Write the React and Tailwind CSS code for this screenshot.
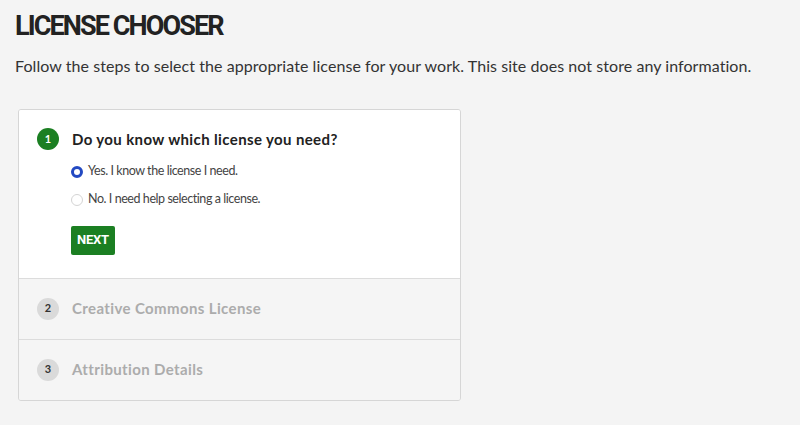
const Step = ({ n, title, active, children }) => (
  <div className={active ? 'bg-white' : 'bg-[#f5f5f5] border-t border-[#dcdcdc]'}>
    <div className={`flex items-center gap-[13px] pl-[18px] ${active ? 'pt-[18px]' : 'h-[60px]'}`}>
      <span
        className={`w-[22px] h-[22px] rounded-full flex items-center justify-center text-[11px] font-bold ${
          active ? 'bg-[#1b7f22] text-white' : 'bg-[#dadada] text-[#333]'
        }`}
      >
        {n}
      </span>
      <h2 className={`text-[15px] font-bold tracking-[0.025em] ${active ? 'text-[#222]' : 'text-[#acacac]'}`}>{title}</h2>
    </div>
    {children}
  </div>
);

const Radio = ({ checked, label }) => (
  <label className="flex items-center gap-[5px] h-[28px]">
    <span
      className={`w-[12px] h-[12px] rounded-full ${
        checked ? 'border-[3px] border-[#2349c2] bg-white' : 'border border-[#d4d4d4] bg-white'
      }`}
    ></span>
    <span className="text-[12.5px] tracking-[-0.035em] text-[#444]">{label}</span>
  </label>
);

export default function App() {
  return (
    <div className="min-h-[425px] bg-[#f4f4f4] px-[15px] pt-[8px] font-['Lato',sans-serif] text-[#222]">
      <h1 className="text-[27px] leading-[36px] font-bold font-['Roboto',sans-serif] tracking-[-0.07em] text-[#222]">
        LICENSE CHOOSER
      </h1>
      <p className="mt-[10px] text-[16px] leading-[24px] tracking-[0.004em] whitespace-nowrap text-[#333]">
        Follow the steps to select the appropriate license for your work. This site does not store any information.
      </p>
      <div className="mt-[31px] ml-[3px] w-[443px] border border-[#d6d6d6] rounded-[3px] overflow-hidden">
        <Step n="1" title="Do you know which license you need?" active>
          <div className="pl-[52px] pt-[7px] pb-[23px]">
            <Radio checked label="Yes. I know the license I need." />
            <Radio label="No. I need help selecting a license." />
            <button className="mt-[12px] h-[29px] px-[6px] bg-[#1b7f22] text-white text-[13px] font-bold font-['Roboto',sans-serif] tracking-[-0.02em] rounded-[2px]">
              NEXT
            </button>
          </div>
        </Step>
        <Step n="2" title="Creative Commons License" />
        <Step n="3" title="Attribution Details" />
      </div>
    </div>
  );
}
